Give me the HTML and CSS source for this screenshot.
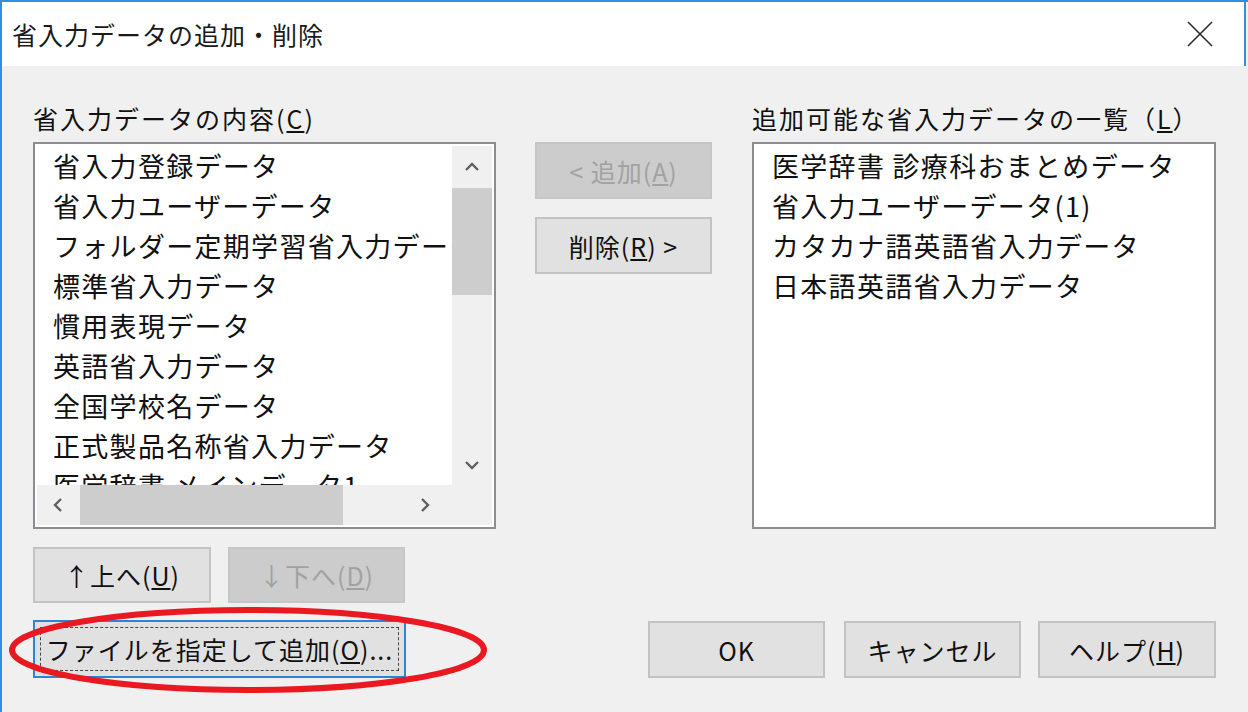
FILE: index.html
```html
<!doctype html>
<html lang="ja">
  <head>
    <meta charset="UTF-8" />
    <meta name="viewport" content="width=device-width, initial-scale=1.0" />
    <title>省入力データの追加・削除</title>
    <link rel="stylesheet" href="styles.css">
  </head>
  <body>
    <div class="window">
      <div class="titlebar">
        <span class="title">省入力データの追加・削除</span>
        <svg class="close" width="26" height="26" viewBox="0 0 26 26">
          <path d="M1 1 L25 25 M25 1 L1 25" stroke="#2b2b2b" stroke-width="1.6" fill="none" />
        </svg>
      </div>

      <div class="client">
        <div class="panes">
          <div class="pane-left">
            <div class="label">省入力データの内容(<u>C</u>)</div>
            <div class="listbox scrolled">
              <ul class="items">
                <li>省入力登録データ</li>
                <li>省入力ユーザーデータ</li>
                <li>フォルダー定期学習省入力データ</li>
                <li>標準省入力データ</li>
                <li>慣用表現データ</li>
                <li>英語省入力データ</li>
                <li>全国学校名データ</li>
                <li>正式製品名称省入力データ</li>
                <li>医学辞書 メインデータ1</li>
              </ul>
              <div class="vscroll">
                <span class="arrow">
                  <svg width="14" height="9" viewBox="0 0 14 9"><polyline points="1,8 7,2 13,8" /></svg>
                </span>
                <span class="vthumb"></span>
                <span class="arrow">
                  <svg width="14" height="9" viewBox="0 0 14 9"><polyline points="1,1 7,7 13,1" /></svg>
                </span>
              </div>
              <div class="hscroll">
                <span class="arrow">
                  <svg width="9" height="14" viewBox="0 0 9 14"><polyline points="8,1 2,7 8,13" /></svg>
                </span>
                <span class="hthumb"></span>
                <span class="arrow">
                  <svg width="9" height="14" viewBox="0 0 9 14"><polyline points="1,1 7,7 1,13" /></svg>
                </span>
              </div>
              <div class="corner"></div>
            </div>
            <div class="order-buttons">
              <button class="btn btn-up">↑上へ(<u>U</u>)</button>
              <button class="btn btn-down" disabled>↓下へ(<u>D</u>)</button>
            </div>
          </div>

          <div class="pane-mid">
            <button class="btn" disabled>&lt; 追加(<u>A</u>)</button>
            <button class="btn">削除(<u>R</u>) &gt;</button>
          </div>

          <div class="pane-right">
            <div class="label">追加可能な省入力データの一覧（<u>L</u>）</div>
            <div class="listbox">
              <ul class="items">
                <li>医学辞書 診療科おまとめデータ</li>
                <li>省入力ユーザーデータ(1)</li>
                <li>カタカナ語英語省入力データ</li>
                <li>日本語英語省入力データ</li>
              </ul>
            </div>
          </div>
        </div>

        <div class="footer">
          <button class="btn btn-file">ファイルを指定して追加(<u>O</u>)...</button>
          <div class="dialog-buttons">
            <button class="btn btn-ok">OK</button>
            <button class="btn btn-cancel">キャンセル</button>
            <button class="btn btn-help">ヘルプ(<u>H</u>)</button>
          </div>
        </div>
      </div>

      <!-- red marker drawn over the file button -->
      <svg class="marker" width="500" height="100" viewBox="0 0 500 100">
        <ellipse cx="248" cy="50" rx="236" ry="40" fill="none" stroke="#ea1820" stroke-width="6" />
      </svg>
    </div>
  </body>
</html>
```

FILE: styles.css
```css
/* Dialog window */
body {
  margin: 0;
  font-family: "Noto Sans CJK JP", "Noto Sans", sans-serif;
  color: #111;
  overflow: hidden;
}

.window {
  position: relative;
  width: 1248px;
  height: 712px;
  box-sizing: border-box;
  border-left: 2px solid #2f8fe0;
  border-top: 2px solid #2f8fe0;
  background-color: #f0f0f0;
}

.titlebar {
  display: flex;
  justify-content: space-between;
  align-items: center;
  height: 64px;
  padding: 0 31px 0 10px;
  background-color: #fff;
  border-right: 2px solid #2f8fe0;
  margin-right: 2px;
}

.title {
  font-size: 25px;
  letter-spacing: 1px;
  color: #1a1a1a;
}

.close {
  display: block;
}

.client {
  padding: 36px 0 0 31px;
}

.panes {
  display: flex;
}

.pane-left {
  width: 463px;
}

.pane-mid {
  width: 177px;
  margin-left: 39px;
  padding-top: 40px;
  display: flex;
  flex-direction: column;
  gap: 18px;
}

.pane-mid .btn {
  height: 57px;
}

.pane-right {
  width: 464px;
  margin-left: 40px;
}

.label {
  height: 32px;
  line-height: 32px;
  margin-bottom: 8px;
  font-size: 25px;
  letter-spacing: 2px;
  white-space: nowrap;
}

/* List boxes */
.listbox {
  height: 387px;
  box-sizing: border-box;
  border: 2px solid #8b8d91;
  padding: 2px;
  background-color: #fff;
}

.listbox.scrolled {
  display: grid;
  grid-template-columns: 1fr 40px;
  grid-template-rows: 1fr 40px;
}

.items {
  list-style: none;
  margin: 0;
  padding: 0;
  overflow: hidden;
}

.items li {
  height: 40px;
  line-height: 40px;
  padding-left: 16px;
  font-size: 27px;
  letter-spacing: 1.3px;
  white-space: nowrap;
}

.vscroll {
  display: flex;
  flex-direction: column;
  background-color: #f0f0f0;
}

.vscroll .arrow {
  height: 40px;
}

.vthumb {
  height: 107px;
  margin: 2px 0 0;
  background-color: #cdcdcd;
}

.vscroll .arrow:last-child {
  margin-top: auto;
}

.hscroll {
  display: flex;
  background-color: #f0f0f0;
}

.hscroll .arrow {
  width: 40px;
}

.hthumb {
  width: 263px;
  margin-left: 3px;
  background-color: #cdcdcd;
}

.hscroll .arrow:last-child {
  margin-left: auto;
  margin-right: 7px;
}

.arrow {
  display: flex;
  align-items: center;
  justify-content: center;
}

.arrow polyline {
  fill: none;
  stroke: #606060;
  stroke-width: 2.4;
}

.corner {
  background-color: #f0f0f0;
}

/* Buttons */
.btn {
  box-sizing: border-box;
  font-family: inherit;
  font-size: 25px;
  letter-spacing: 1px;
  color: #111;
  background-color: #e1e1e1;
  border: 2px solid #c3c3c3;
  padding: 0;
  cursor: pointer;
}

.btn:disabled {
  color: #a2a2a2;
  background-color: #cccccc;
  border-color: #c6c6c6;
  cursor: default;
}

.order-buttons {
  display: flex;
  gap: 17px;
  margin-top: 18px;
}

.order-buttons .btn {
  height: 56px;
}

.btn-up {
  width: 178px;
}

.btn-down {
  width: 177px;
}

.footer {
  display: flex;
  justify-content: space-between;
  align-items: flex-start;
  width: 1183px;
  margin-top: 17px;
}

.btn-file {
  width: 373px;
  height: 58px;
  border-color: #2a85d6;
  outline: 1px dashed #444;
  outline-offset: -8px;
}

.dialog-buttons {
  display: flex;
  margin-top: 1px;
}

.dialog-buttons .btn {
  height: 57px;
}

.btn-ok {
  width: 177px;
  margin-right: 19px;
}

.btn-cancel {
  width: 177px;
  margin-right: 17px;
}

.btn-help {
  width: 178px;
}

/* Red highlight ellipse */
.marker {
  position: absolute;
  left: -2px;
  top: 598px;
  pointer-events: none;
}
```
